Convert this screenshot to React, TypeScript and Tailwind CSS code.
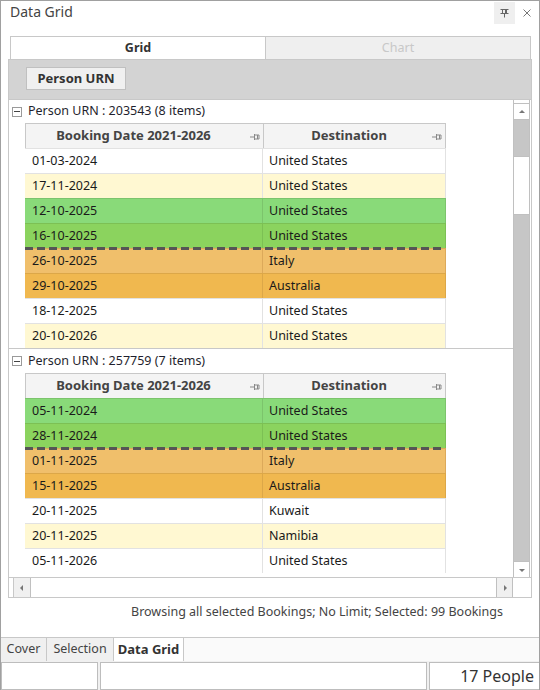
import React from "react";

type Row = { date: string; dest: string; tone: "white" | "cream" | "green1" | "green2" | "orange1" | "orange2"; dashed?: boolean };

const groups: { urn: string; rows: Row[] }[] = [
  {
    urn: "203543",
    rows: [
      { date: "01-03-2024", dest: "United States", tone: "white" },
      { date: "17-11-2024", dest: "United States", tone: "cream" },
      { date: "12-10-2025", dest: "United States", tone: "green1" },
      { date: "16-10-2025", dest: "United States", tone: "green2", dashed: true },
      { date: "26-10-2025", dest: "Italy", tone: "orange1" },
      { date: "29-10-2025", dest: "Australia", tone: "orange2" },
      { date: "18-12-2025", dest: "United States", tone: "white" },
      { date: "20-10-2026", dest: "United States", tone: "cream" },
    ],
  },
  {
    urn: "257759",
    rows: [
      { date: "05-11-2024", dest: "United States", tone: "green1" },
      { date: "28-11-2024", dest: "United States", tone: "green2", dashed: true },
      { date: "01-11-2025", dest: "Italy", tone: "orange1" },
      { date: "15-11-2025", dest: "Australia", tone: "orange2" },
      { date: "20-11-2025", dest: "Kuwait", tone: "white" },
      { date: "20-11-2025", dest: "Namibia", tone: "cream" },
      { date: "05-11-2026", dest: "United States", tone: "white" },
    ],
  },
];

const toneClass: Record<Row["tone"], string> = {
  white: "bg-white border-[#e2e2e2]",
  cream: "bg-[#fff8d2] border-[#e2e2e2]",
  green1: "bg-[#89da79] border-[#7cc46c]",
  green2: "bg-[#8bd35e] border-[#7cc054]",
  orange1: "bg-[#f0bf6b] border-[#dca95a]",
  orange2: "bg-[#f0b84f] border-[#dca748]",
};

function HeaderPin() {
  return (
    <svg width="10" height="8" viewBox="0 0 10 8" className="absolute right-[3px] top-[9px]">
      <path d="M0 4H4M4.5 1V7M4.5 2H9V6H4.5M7.5 2V6" stroke="#8a8a8a" strokeWidth="1" fill="none" />
    </svg>
  );
}

function MinusBox() {
  return (
    <span className="flex h-[10px] w-[10px] items-center justify-center border border-[#9a9a9a] bg-white">
      <span className="h-px w-[6px] bg-[#444]" />
    </span>
  );
}

function Group({ urn, rows, first }: { urn: string; rows: Row[]; first?: boolean }) {
  return (
    <div className={first ? "" : "border-t border-[#c8c8c8]"}>
      <div className={`flex items-center gap-[6px] pl-[3px] ${first ? "h-[23px]" : "h-[24px]"}`}>
        <MinusBox />
        <span className="text-[12.5px] text-[#1f1f2e]">
          Person URN : {urn} ({rows.length} items)
        </span>
      </div>
      <div className="ml-[16px] w-[421px]">
        <div className="flex h-[25px] border border-b-0 border-[#c8c8c8] bg-[#f4f4f4] text-[13px] font-bold text-[#444]">
          <div className="relative flex w-[238px] items-center justify-center border-r border-[#c8c8c8] pr-[22px]">
            Booking Date 2021-2026
            <HeaderPin />
          </div>
          <div className="relative flex flex-1 items-center justify-center pr-[11px]">
            Destination
            <HeaderPin />
          </div>
        </div>
        {rows.map((r, i) => (
          <div key={i} className={`relative flex h-[25px] border-t border-r text-[12.5px] text-[#1a1a1a] ${toneClass[r.tone]}`}>
            <div className="flex w-[238px] items-center border-r border-inherit pl-[7px]">{r.date}</div>
            <div className="flex flex-1 items-center pl-[6px]">{r.dest}</div>
            {r.dashed && (
              <div className="absolute -bottom-[2px] left-0 right-0 z-10 h-[3px] bg-[repeating-linear-gradient(90deg,#555_0_8px,transparent_8px_12px)]" />
            )}
          </div>
        ))}
      </div>
    </div>
  );
}

function Arrow({ dir }: { dir: "up" | "down" | "left" | "right" }) {
  const d = {
    up: "M0 4L3 1L6 4Z",
    down: "M0 2L3 5L6 2Z",
    left: "M4 0L1 3L4 6Z",
    right: "M2 0L5 3L2 6Z",
  }[dir];
  return (
    <svg width="6" height="6" viewBox="0 0 6 6">
      <path d={d} fill="#777" />
    </svg>
  );
}

export default function App() {
  return (
    <div
      className="flex h-[690px] w-[540px] flex-col border border-b-0 border-[#a0a0a0] bg-white"
      style={{ fontFamily: '"Noto Sans", "Open Sans", sans-serif' }}
    >
      {/* title */}
      <div className="flex h-[35px] items-start justify-between">
        <span className="ml-[9px] text-[14px] text-[#444]">Data Grid</span>
        <div className="mr-[6px] mt-[1px] flex items-center gap-[6px]">
          <div className="flex h-[22px] w-[21px] items-center justify-center bg-[#efefef]">
            <svg width="9" height="10" viewBox="0 0 9 10">
              <path d="M0.5 1.5H8.5M2.5 1.5V5.5H6.5V1.5M5.5 1.5V5.5M0.5 5.5H8.5M4.5 5.5V9.5" stroke="#666" strokeWidth="1" fill="none" />
            </svg>
          </div>
          <div className="flex h-[22px] w-[12px] items-center justify-center">
            <svg width="8" height="8" viewBox="0 0 8 8">
              <path d="M0.5 0.5L7.5 7.5M7.5 0.5L0.5 7.5" stroke="#777" strokeWidth="1" />
            </svg>
          </div>
        </div>
      </div>

      {/* top tabs */}
      <div className="ml-[9px] mr-[8px] flex h-[23px] text-[12.5px] font-bold">
        <div className="flex w-[256px] items-center justify-center border border-b-0 border-[#c8c8c8] bg-white text-[#333]">Grid</div>
        <div className="flex flex-1 items-center justify-center border border-b-0 border-l-0 border-[#c8c8c8] bg-[#efefef] font-normal text-[#c8c8c8]">
          Chart
        </div>
      </div>

      {/* grid panel */}
      <div className="ml-[7px] mr-[7px] flex flex-col border border-[#c8c8c8]">
        <div className="flex h-[39px] items-start bg-[#d3d3d3] pl-[17px] pt-[7px]">
          <div className="flex h-[23px] w-[100px] items-center justify-center border border-[#c0c0c0] bg-[#f0f0f0] text-[13px] font-bold text-[#333]">
            Person URN
          </div>
        </div>
        <div className="flex h-[478px] border-t border-[#c8c8c8]">
          <div className="flex-1 overflow-hidden bg-white">
            {groups.map((g, i) => (
              <Group key={g.urn} urn={g.urn} rows={g.rows} first={i === 0} />
            ))}
          </div>
          <div className="mr-[1px] flex w-[17px] flex-col border-x border-[#c0c0c0] bg-[#c6c6c6]">
            <div className="h-[4px] border-b border-[#c0c0c0] bg-white" />
            <div className="flex h-[16px] items-center justify-center border-b border-[#c0c0c0] bg-white">
              <Arrow dir="up" />
            </div>
            <div className="mt-[36px] h-[59px] border-y border-[#c0c0c0] bg-white" />
            <div className="flex-1" />
            <div className="flex h-[16px] items-center justify-center border-t border-[#c0c0c0] bg-white">
              <Arrow dir="down" />
            </div>
          </div>
        </div>
        <div className="flex h-[20px] border-t border-[#c8c8c8] bg-white">
          <div className="ml-[1px] h-full w-[4px] border-r border-[#c8c8c8]" />
          <div className="flex w-[17px] items-center justify-center border-r border-[#c0c0c0] bg-[#f0f0f0]">
            <Arrow dir="left" />
          </div>
          <div className="flex-1" />
          <div className="flex w-[17px] items-center justify-center border-x border-[#c0c0c0] bg-[#f0f0f0]">
            <Arrow dir="right" />
          </div>
          <div className="w-[18px]" />
        </div>
      </div>

      {/* status text */}
      <div className="flex h-[28px] items-center justify-end pr-[36px] text-[12.5px] text-[#444]">
        Browsing all selected Bookings; No Limit; Selected: 99 Bookings
      </div>

      <div className="flex-1" />

      {/* bottom tabs */}
      <div className="flex h-[24px] border-t border-[#c8c8c8] bg-[#fafafa] text-[12.5px] text-[#444]">
        <div className="flex w-[46px] items-center justify-center border-r border-[#c8c8c8] bg-[#f0f0f0]">Cover</div>
        <div className="flex w-[67px] items-center justify-center border-r border-[#c8c8c8] bg-[#f0f0f0]">Selection</div>
        <div className="-mt-px flex w-[70px] items-center justify-center border-r border-t border-[#c8c8c8] bg-white text-[13px] font-bold text-[#333]">
          Data Grid
        </div>
      </div>

      {/* status bar */}
      <div className="flex h-[29px] bg-[#f0f0f0] pt-[1px]">
        <div className="w-[97px] border border-[#bdbdbd] bg-white" />
        <div className="ml-[2px] w-[327px] border border-[#bdbdbd] bg-white" />
        <div className="ml-[2px] flex flex-1 items-center justify-end border border-r-0 border-[#bdbdbd] bg-white pr-[5px] text-[16px] text-[#333]">
          17 People
        </div>
      </div>
    </div>
  );
}
